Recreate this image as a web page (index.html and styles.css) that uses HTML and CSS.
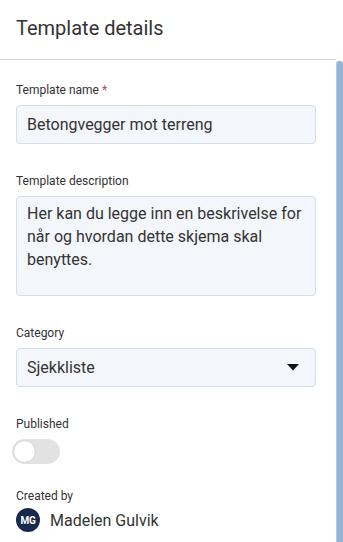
FILE: index.html
```html
<!DOCTYPE html>
<html lang="en">
<head>
  <meta charset="UTF-8" />
  <meta name="viewport" content="width=device-width, initial-scale=1.0" />
  <title>Template details</title>
  <link rel="stylesheet" href="styles.css">
</head>
<body>
  <div class="panel">
    <header class="panel-header">
      <h2>Template details</h2>
    </header>

    <div class="panel-body">
      <div class="panel-content">
        <div class="form-group">
          <label for="templateName">Template name <span class="required">*</span></label>
          <input type="text" id="templateName" class="form-control" value="Betongvegger mot terreng" />
        </div>

        <div class="form-group">
          <label for="templateDescription">Template description</label>
          <textarea id="templateDescription" class="form-control textarea">Her kan du legge inn en beskrivelse for når og hvordan dette skjema skal benyttes.</textarea>
        </div>

        <div class="form-group">
          <label>Category</label>
          <div class="form-control select">
            <span>Sjekkliste</span>
            <svg width="12" height="7" viewBox="0 0 12 7"><path d="M0 0h12L6 6.5z" fill="#111"/></svg>
          </div>
        </div>

        <div class="form-group published">
          <label>Published</label>
          <div class="switch">
            <span class="knob"></span>
          </div>
        </div>

        <div class="form-group">
          <label>Created by</label>
          <div class="user">
            <span class="avatar">MG</span>
            <span class="user-name">Madelen Gulvik</span>
          </div>
        </div>
      </div>

      <div class="scrollbar"></div>
    </div>
  </div>
</body>
</html>
```

FILE: styles.css
```css
body {
  font-family: Roboto, "Noto Sans", sans-serif;
  background-color: #fff;
  color: #333;
  margin: 0;
  padding: 0;
}

.panel {
  width: 343px;
  height: 542px;
  overflow: hidden;
}

.panel-header {
  height: 60px;
  border-bottom: 1px solid #cdd8e3;
  display: flex;
  align-items: center;
  padding: 0 16px 4px;
  box-sizing: border-box;
  margin-right: 7px;
}

.panel-header h2 {
  margin: 0;
  font-size: 20px;
  font-weight: 400;
  color: #333;
}

.panel-body {
  display: flex;
}

.panel-content {
  flex: 1;
  padding: 22px 20px 0 16px;
}

.form-group {
  margin-bottom: 29px;
}

.form-group.published {
  margin-bottom: 24px;
}

.form-group label {
  display: block;
  font-size: 12px;
  line-height: 16px;
  margin-bottom: 7px;
  color: #333;
}

.required {
  color: #c0474f;
}

.form-control {
  display: block;
  width: 100%;
  height: 39px;
  box-sizing: border-box;
  padding: 0 10px;
  background: #f3f6fa;
  border: 1px solid #d3deea;
  border-radius: 4px;
  font-family: Roboto, "Noto Sans", sans-serif;
  font-size: 16px;
  color: #333;
  outline: none;
}

.textarea {
  height: 100px;
  padding: 5px 10px;
  line-height: 23px;
  resize: none;
}

.select {
  display: flex;
  align-items: center;
  justify-content: space-between;
  padding-right: 16px;
}

.switch {
  width: 48px;
  height: 25px;
  margin-left: -4px;
  border-radius: 13px;
  background: #e2e2e2;
  display: flex;
  align-items: center;
  padding: 0 2px;
  box-sizing: border-box;
}

.knob {
  width: 21px;
  height: 21px;
  border-radius: 50%;
  background: #fff;
  box-shadow: 0 0 1px rgba(0, 0, 0, 0.25);
}

.user {
  display: flex;
  align-items: center;
  gap: 10px;
  margin-top: -3px;
}

.avatar {
  width: 24px;
  height: 24px;
  border-radius: 50%;
  background: #172a4b;
  color: #fff;
  font-size: 10px;
  font-weight: 700;
  display: flex;
  align-items: center;
  justify-content: center;
  letter-spacing: -0.3px;
}

.user-name {
  font-size: 16px;
}

.scrollbar {
  width: 6px;
  height: 490px;
  margin-top: 1px;
  background: #96b4d7;
  border-left: 1px solid #b3c8e1;
  border-radius: 3px 3px 0 0;
}
```
